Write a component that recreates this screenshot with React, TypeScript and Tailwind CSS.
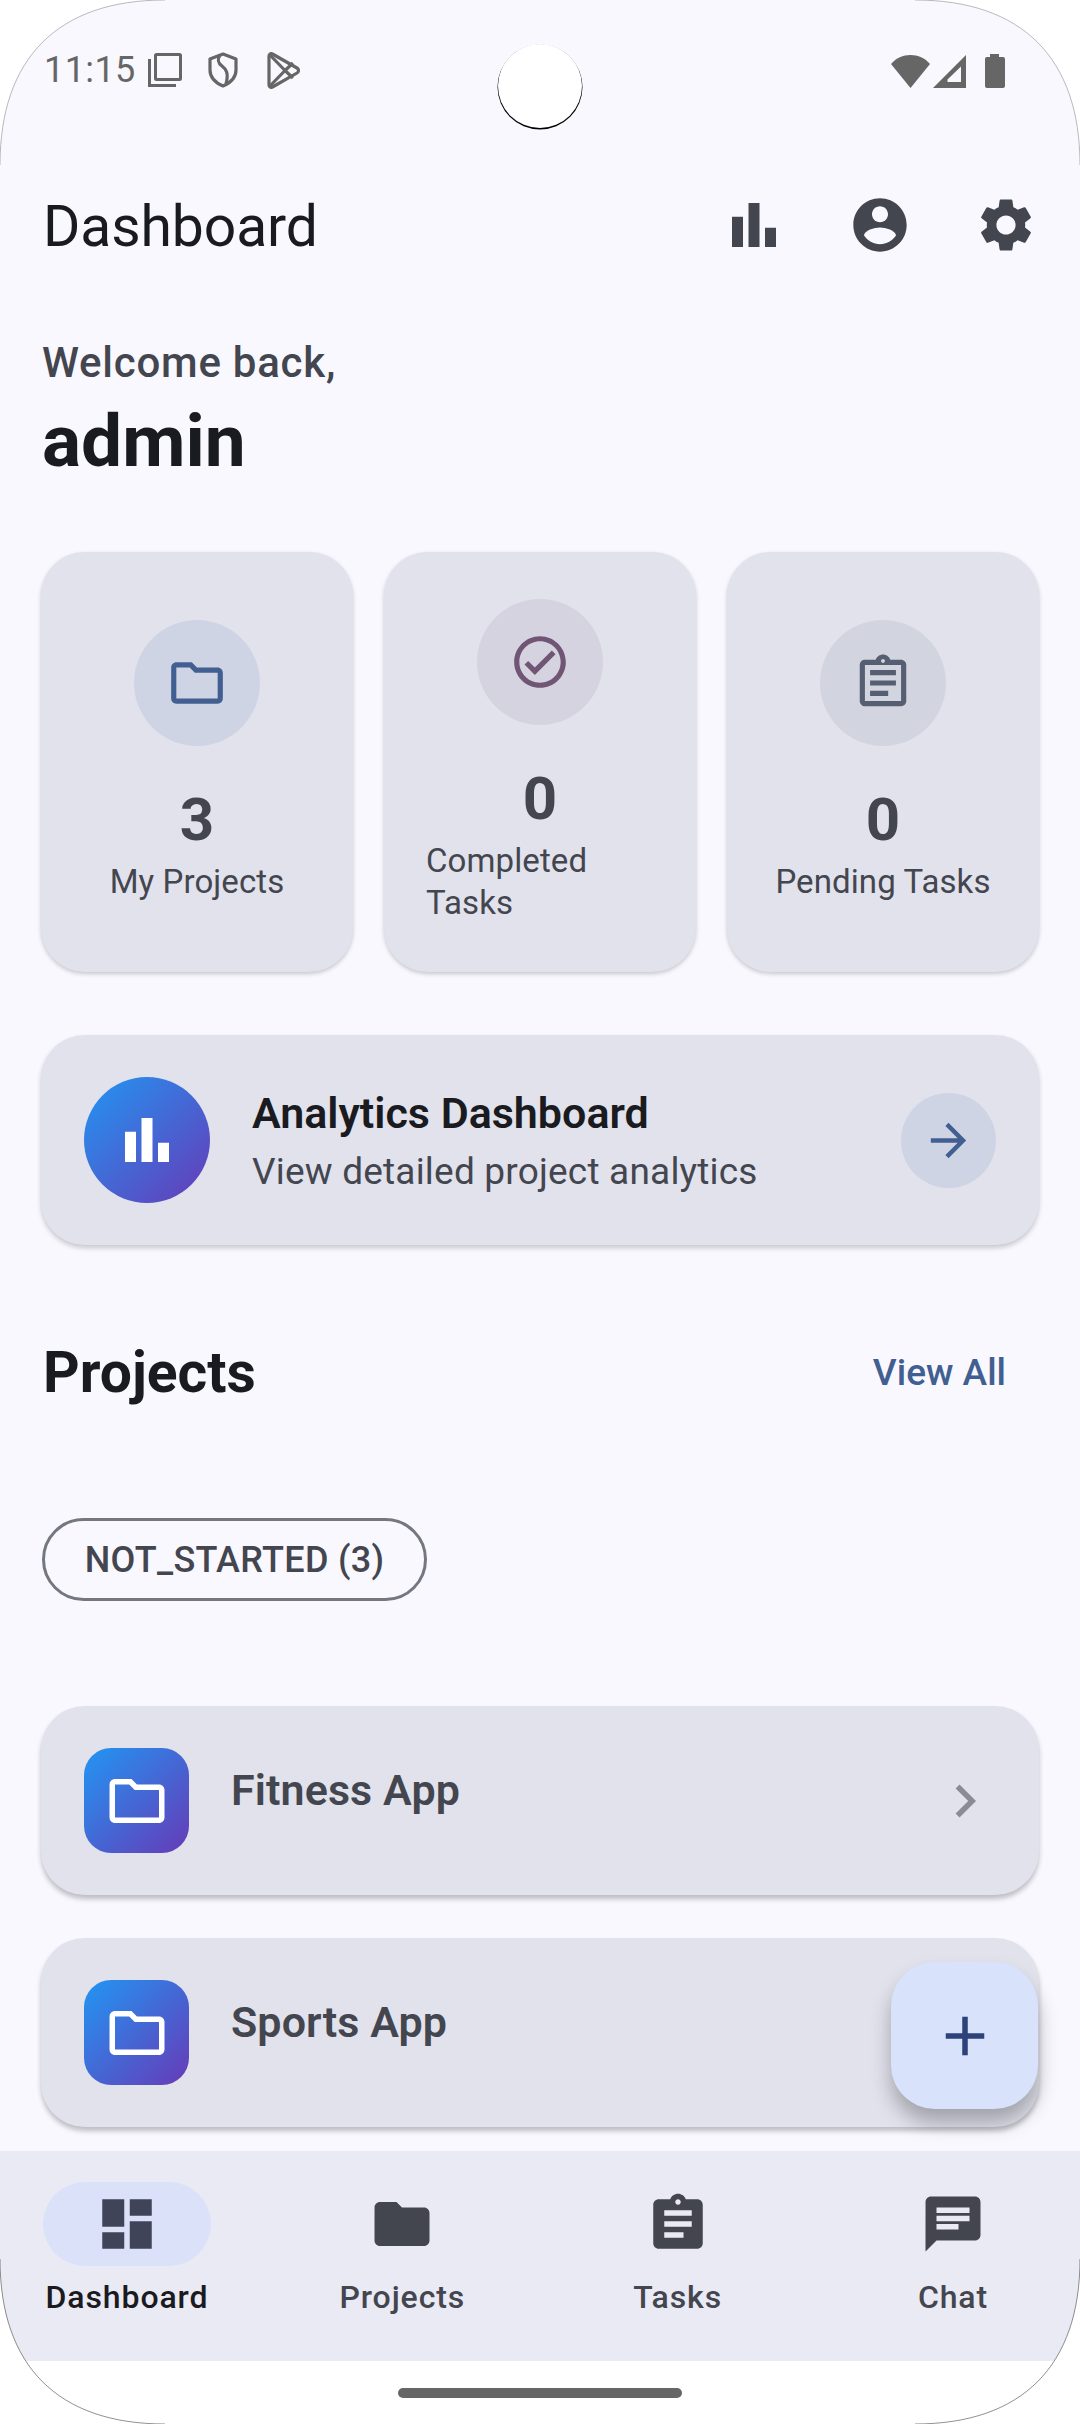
import React from "react";

const P = {
  bar: "M4 9h4v11H4zM16 13h4v7h-4zM10 4h4v16h-4z",
  account: "M12 2C6.48 2 2 6.48 2 12s4.48 10 10 10 10-4.48 10-10S17.52 2 12 2zm0 3c1.66 0 3 1.34 3 3s-1.34 3-3 3-3-1.34-3-3 1.34-3 3-3zm0 14.2c-2.5 0-4.71-1.28-6-3.22.03-1.99 4-3.08 6-3.08 1.99 0 5.97 1.09 6 3.08-1.29 1.94-3.5 3.22-6 3.22z",
  gear: "M19.14 12.94c.04-.3.06-.61.06-.94 0-.32-.02-.64-.07-.94l2.03-1.58c.18-.14.23-.41.12-.61l-1.92-3.32c-.12-.22-.37-.29-.59-.22l-2.39.96c-.5-.38-1.03-.7-1.62-.94l-.36-2.54c-.04-.24-.24-.41-.48-.41h-3.84c-.24 0-.43.17-.47.41l-.36 2.54c-.59.24-1.13.57-1.62.94l-2.39-.96c-.22-.08-.47 0-.59.22L2.74 8.87c-.12.21-.08.47.12.61l2.03 1.58c-.05.3-.09.63-.09.94s.02.64.07.94l-2.03 1.58c-.18.14-.23.41-.12.61l1.92 3.32c.12.22.37.29.59.22l2.39-.96c.5.38 1.03.7 1.62.94l.36 2.54c.05.24.24.41.48.41h3.84c.24 0 .44-.17.47-.41l.36-2.54c.59-.24 1.13-.56 1.62-.94l2.39.96c.22.08.47 0 .59-.22l1.92-3.32c.12-.22.07-.47-.12-.61l-2.01-1.58zM12 15.6c-1.98 0-3.6-1.62-3.6-3.6s1.62-3.6 3.6-3.6 3.6 1.62 3.6 3.6-1.62 3.6-3.6 3.6z",
  folderO: "M9.17 6l2 2H20v10H4V6h5.17M10 4H4c-1.1 0-1.99.9-1.99 2L2 18c0 1.1.9 2 2 2h16c1.1 0 2-.9 2-2V8c0-1.1-.9-2-2-2h-8l-2-2z",
  folder: "M10 4H4c-1.1 0-1.99.9-1.99 2L2 18c0 1.1.9 2 2 2h16c1.1 0 2-.9 2-2V8c0-1.1-.9-2-2-2h-8l-2-2z",
  check: "M12 2C6.48 2 2 6.48 2 12s4.48 10 10 10 10-4.48 10-10S17.52 2 12 2zm0 18c-4.41 0-8-3.59-8-8s3.59-8 8-8 8 3.59 8 8-3.59 8-8 8zm4.59-12.42L10 14.17l-2.59-2.58L6 13l4 4 8-8z",
  assignO: "M7 15h7v2H7zm0-4h10v2H7zm0-4h10v2H7zm12-4h-4.18C14.4 1.84 13.3 1 12 1c-1.3 0-2.4.84-2.82 2H5c-.14 0-.27.01-.4.04-.39.08-.74.28-1.01.55-.18.18-.33.4-.43.64-.1.23-.16.49-.16.77v14c0 .27.06.54.16.78s.25.45.43.64c.27.27.62.47 1.01.55.13.02.26.03.4.03h14c1.1 0 2-.9 2-2V5c0-1.1-.9-2-2-2zm-7-.25c.41 0 .75.34.75.75s-.34.75-.75.75-.75-.34-.75-.75.34-.75.75-.75zM19 19H5V5h14v14z",
  assign: "M19 3h-4.18C14.4 1.84 13.3 1 12 1c-1.3 0-2.4.84-2.82 2H5c-1.1 0-2 .9-2 2v14c0 1.1.9 2 2 2h14c1.1 0 2-.9 2-2V5c0-1.1-.9-2-2-2zm-7 0c.55 0 1 .45 1 1s-.45 1-1 1-1-.45-1-1 .45-1 1-1zm2 14H7v-2h7v2zm3-4H7v-2h10v2zm0-4H7V7h10v2z",
  dash: "M3 13h8V3H3v10zm0 8h8v-6H3v6zm10 0h8V11h-8v10zm0-18v6h8V3h-8z",
  chat: "M20 2H4c-1.1 0-1.99.9-1.99 2L2 22l4-4h14c1.1 0 2-.9 2-2V4c0-1.1-.9-2-2-2zM6 9h12v2H6V9zm8 5H6v-2h8v2zm4-6H6V6h12v2z",
  arrow: "M12 4l-1.41 1.41L16.17 11H4v2h12.17l-5.58 5.59L12 20l8-8z",
  chev: "M10 6L8.59 7.41 13.17 12l-4.58 4.59L10 18l6-6z",
  add: "M19 13h-6v6h-2v-6H5v-2h6V5h2v6h6v2z",
};

function Icon({ d, className }: { d: string; className: string }) {
  return (
    <svg viewBox="0 0 24 24" className={className} fill="currentColor">
      <path d={d} fillRule="evenodd" />
    </svg>
  );
}

function StatCard({ icon, iconColor, circle, value, label }: { icon: string; iconColor: string; circle: string; value: string; label: string }) {
  return (
    <div className="w-[312px] h-[420px] pb-[2px] rounded-[44px] bg-[#e1e2ec] shadow-[0_2px_4px_rgba(0,0,0,0.2)] flex flex-col items-center justify-center">
      <div className={`w-[126px] h-[126px] rounded-full flex items-center justify-center ${circle}`}>
        <Icon d={icon} className={`w-[62px] h-[62px] ${iconColor}`} />
      </div>
      <div className="mt-[38px] text-[60px] leading-[72px] font-bold text-[#44464f]">{value}</div>
      <div className="mt-[5px] w-[228px] flex justify-center text-[33px] leading-[42px] tracking-[0.1px] text-[#44464f]">
        <span>{label}</span>
      </div>
    </div>
  );
}

function ProjectCard({ name, chevron }: { name: string; chevron?: boolean }) {
  return (
    <div className="h-[189px] rounded-[44px] bg-[#e1e2ec] shadow-[0_4px_5px_rgba(0,0,0,0.24)] flex items-center pl-[43px] pr-[41px]">
      <div className="w-[105px] h-[105px] rounded-[27px] bg-linear-to-br/srgb from-[#2196f3] to-[#673ab7] flex items-center justify-center">
        <Icon d={P.folderO} className="w-[66px] h-[66px] text-white" />
      </div>
      <div className="ml-[42px] flex-1 pb-[22px] text-[43px] tracking-[0.1px] leading-[54px] font-semibold text-[#44464f]">{name}</div>
      {chevron && <Icon d={P.chev} className="w-[66px] h-[66px] text-[#8a8b93]" />}
    </div>
  );
}

function NavItem({ icon, label, active }: { icon: string; label: string; active?: boolean }) {
  return (
    <div className="w-[168px] flex flex-col items-center">
      <div className={`w-[168px] h-[84px] rounded-full flex items-center justify-center ${active ? "bg-[#dce1fa]" : ""}`}>
        <Icon d={icon} className={`w-[66px] h-[66px] ${active ? "text-[#3f4459]" : "text-[#44464f]"}`} />
      </div>
      <div className={`mt-[11px] text-[32px] leading-[40px] font-medium tracking-[0.9px] whitespace-nowrap ${active ? "text-[#1a1b20]" : "text-[#44464f]"}`}>
        {label}
      </div>
    </div>
  );
}

export default function App() {
  return (
    <div className="relative w-[1080px] h-[2424px] overflow-hidden bg-white font-['Roboto',sans-serif]">
      <div className="flex flex-col h-full">
        <div className="flex-1 min-h-0 bg-[#f9f8ff] flex flex-col">
          {/* status bar */}
          <div className="h-[140px] shrink-0 flex items-start justify-between pl-[44px] pr-[75px] pt-[48px]">
            <div className="flex items-center text-[#666666]">
              <span className="text-[36px] leading-[44px] tracking-[0.4px]">11:15</span>
              <svg viewBox="0 0 34 34" className="ml-[12px] w-[34px] h-[34px]" fill="none" stroke="currentColor" strokeWidth="3">
                <rect x="7.5" y="1.5" width="25" height="25" rx="1" />
                <path d="M1.5 6v26.5H28" />
              </svg>
              <svg viewBox="0 0 30 36" className="ml-[26px] w-[30px] h-[36px]" fill="none" stroke="currentColor" strokeWidth="3.2" strokeLinejoin="round">
                <path d="M15 2L28 7v11c0 8-6 13-13 16C8 31 2 26 2 18V7z" />
                <path d="M12 3c-3 5-2 8 2 11s7 7 4 18" />
              </svg>
              <svg viewBox="0 0 34 37" className="ml-[28px] w-[34px] h-[37px]" fill="none" stroke="currentColor" strokeWidth="3.2" strokeLinejoin="round">
                <path d="M3 4c0-2 2-3 3.5-2L31 16c2 1.2 2 3.8 0 5L6.500 35C5 36 3 35 3 33z" />
                <path d="M4 3l15 15.500L4 34M19 18.500L27 11M19 18.500L27 26" />
              </svg>
            </div>
            <div className="flex items-center gap-[3px] pt-[6px] text-[#666666]">
              <svg viewBox="0 0 39 33" className="w-[39px] h-[33px]" fill="currentColor">
                <path d="M0 9C5 3 12 0 19.500 0S34 3 39 9L19.500 33z" />
              </svg>
              <svg viewBox="0 0 33 33" className="w-[33px] h-[33px]" fill="none">
                <path d="M33 0v33H0z" fill="currentColor" />
                <path d="M28 11.500V27H14.500V24.500z" fill="#f9f8ff" />
              </svg>
              <svg viewBox="0 0 20 34" className="ml-[16px] w-[20px] h-[34px]" fill="currentColor">
                <path d="M5 0h9v3h4c1.200 0 2 .8 2 2v27c0 1.200-.8 2-2 2H2c-1.200 0-2-.8-2-2V5c0-1.200.8-2 2-2h3z" />
              </svg>
            </div>
          </div>

          {/* app bar */}
          <div className="h-[170px] shrink-0 flex items-center pl-[43px] pr-[41px]">
            <h1 className="flex-1 pt-[3px] text-[57px] leading-[70px] tracking-[-0.1px] text-[#1a1b20]">Dashboard</h1>
            <div className="flex items-center gap-[60px] text-[#44464f]">
              <Icon d={P.bar} className="w-[66px] h-[66px]" />
              <Icon d={P.account} className="w-[64px] h-[64px] mx-[1px]" />
              <Icon d={P.gear} className="w-[64px] h-[64px] mx-[1px]" />
            </div>
          </div>

          {/* content */}
          <div className="flex-1 min-h-0 overflow-hidden px-[41px]">
            <div className="ml-[1px] mt-[25px] text-[42px] leading-[56px] font-medium tracking-[0.75px] text-[#44464f]">Welcome back,</div>
            <div className="ml-[1px] mt-[7px] text-[73px] leading-[86px] font-bold text-[#1a1b20]">admin</div>

            <div className="mt-[68px] flex justify-between">
              <StatCard icon={P.folderO} iconColor="text-[#415f91]" circle="bg-[#cfd4e4]" value="3" label="My Projects" />
              <StatCard icon={P.check} iconColor="text-[#705575]" circle="bg-[#d5d3df]" value="0" label="Completed Tasks" />
              <StatCard icon={P.assignO} iconColor="text-[#565e71]" circle="bg-[#d2d4df]" value="0" label="Pending Tasks" />
            </div>

            <div className="mt-[63px] h-[210px] rounded-[44px] bg-[#e1e2ec] shadow-[0_3px_5px_rgba(0,0,0,0.2)] flex items-center pl-[43px] pr-[43px]">
              <div className="w-[126px] h-[126px] rounded-full bg-linear-to-br/srgb from-[#2196f3] to-[#673ab7] flex items-center justify-center">
                <Icon d={P.bar} className="w-[66px] h-[66px] text-white" />
              </div>
              <div className="ml-[42px] flex-1 pt-[4px]">
                <div className="text-[43px] leading-[57px] font-semibold text-[#1a1b20]">Analytics Dashboard</div>
                <div className="mt-[1px] text-[37px] leading-[57px] tracking-[0.2px] text-[#44464f]">View detailed project analytics</div>
              </div>
              <div className="w-[95px] h-[95px] rounded-full bg-[#cfd4e4] flex items-center justify-center">
                <Icon d={P.arrow} className="w-[53px] h-[53px] text-[#415f91]" />
              </div>
            </div>

            <div className="mt-[93px] flex items-center justify-between pl-[2px] pr-[33px]">
              <div className="text-[57px] leading-[70px] font-bold text-[#1a1b20]">Projects</div>
              <div className="text-[37px] leading-[50px] font-medium text-[#415f91]">View All</div>
            </div>

            <div className="mt-[110px] ml-[1px] w-[385px] h-[83px] rounded-full border-[3px] border-[#74777f] flex items-center justify-center text-[36px] font-medium tracking-[0.3px] text-[#44464f] whitespace-nowrap">
              NOT_STARTED (3)
            </div>

            <div className="mt-[105px] flex flex-col gap-[43px]">
              <ProjectCard name="Fitness App" chevron />
              <ProjectCard name="Sports App" />
            </div>
          </div>
        </div>

        {/* bottom nav */}
        <div className="h-[210px] shrink-0 bg-[#eaeaf4] flex justify-between px-[43px] pt-[31px]">
          <NavItem icon={P.dash} label="Dashboard" active />
          <NavItem icon={P.folder} label="Projects" />
          <NavItem icon={P.assign} label="Tasks" />
          <NavItem icon={P.chat} label="Chat" />
        </div>
        <div className="h-[63px] shrink-0 bg-white flex justify-center pt-[27px]">
          <div className="w-[284px] h-[10px] rounded-full bg-[#666666]" />
        </div>
      </div>

      {/* FAB */}
      <div className="absolute left-[891px] top-[1962px] w-[147px] h-[147px] rounded-[44px] bg-[#d9e2fb] shadow-[0_14px_20px_rgba(0,0,0,0.28)] flex items-center justify-center">
        <Icon d={P.add} className="w-[66px] h-[66px] text-[#2c4278]" />
      </div>

      {/* camera */}
      <div className="absolute left-[498px] top-[44px] w-[84px] h-[84px] rounded-full bg-white shadow-[0_1px_0_0.5px_#000]" />

      {/* screen corners */}
      <svg viewBox="0 0 1080 2424" className="absolute inset-0 w-[1080px] h-[2424px]" fill="#ffffff">
        <path d="M165 0C58 0 0 58 0 165V0z" />
        <path d="M915 0c107 0 165 58 165 165V0z" />
        <path d="M0 2259c0 107 58 165 165 165H0z" />
        <path d="M1080 2259c0 107-58 165-165 165h165z" />
        <g fill="none" strokeWidth="0.5">
          <path d="M165 0C58 0 0 58 0 165" stroke="#777777" />
          <path d="M915 0c107 0 165 58 165 165" stroke="#777777" />
          <path d="M0 2259c0 107 58 165 165 165" stroke="#222222" />
          <path d="M1080 2259c0 107-58 165-165 165" stroke="#222222" />
        </g>
      </svg>
    </div>
  );
}
